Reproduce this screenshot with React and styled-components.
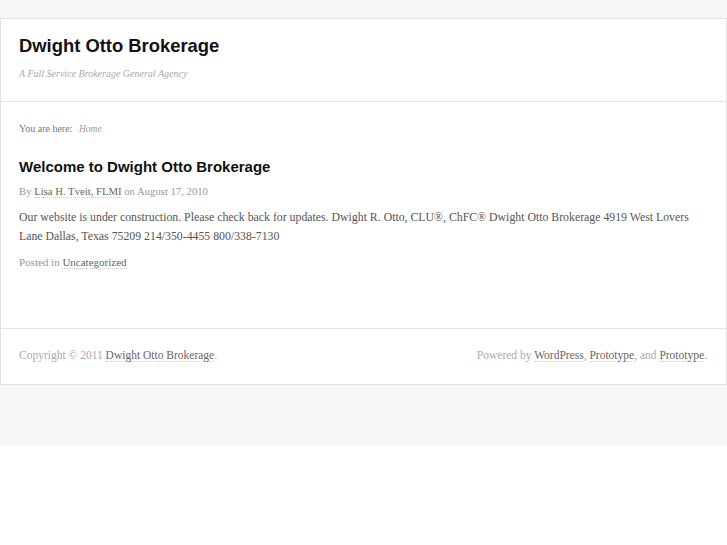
import styled, { createGlobalStyle } from "styled-components";

const GlobalStyle = createGlobalStyle`
  html {
    background: #fff;
  }
  body {
    margin: 0;
    padding: 18px 0 60px;
    background: #f7f7f7;
    font-family: "Liberation Serif", "Times New Roman", serif;
    color: #555;
  }
`;

const Page = styled.div`
  background: #fff;
  border: 1px solid #e3e3e3;
`;

const Header = styled.header`
  padding: 15px 18px 20px;
  border-bottom: 1px solid #e3e3e3;
`;

const SiteTitle = styled.h1`
  margin: 0;
  font-family: "Liberation Sans", Arial, sans-serif;
  font-size: 18.4px;
  line-height: 24px;
  font-weight: bold;
  color: #111;
`;

const Tagline = styled.p`
  margin: 9px 0 0;
  font-size: 10px;
  line-height: 14px;
  font-style: italic;
  color: #aaa;
`;

const Main = styled.main`
  padding: 20px 18px 58px;
`;

const Breadcrumb = styled.div`
  font-size: 10px;
  line-height: 14px;
  color: #777;
`;

const Current = styled.em`
  margin-left: 4px;
  font-size: 9.5px;
  color: #999;
`;

const PostTitle = styled.h2`
  margin: 21px 0 0;
  font-family: "Liberation Sans", Arial, sans-serif;
  font-size: 15px;
  line-height: 20px;
  font-weight: bold;
  color: #111;
`;

const Meta = styled.div`
  margin-top: ${(p) => p.$top || 0}px;
  font-size: ${(p) => p.$size || 11}px;
  line-height: 16px;
  color: #999;
`;

const Link = styled.a`
  color: #666;
  text-decoration: none;
  border-bottom: 1px dotted #ccc;
`;

const Body = styled.p`
  margin: 9px 0 0;
  font-size: 11.8px;
  line-height: 19px;
  color: #555;
`;

const Footer = styled.footer`
  display: flex;
  justify-content: space-between;
  align-items: center;
  padding: 19px 19px 22px 18px;
  border-top: 1px solid #e3e3e3;
  font-size: 11.5px;
  line-height: 14px;
  color: #aaa;
`;

export default function App() {
  return (
    <>
      <GlobalStyle />
      <Page>
        <Header>
          <SiteTitle>Dwight Otto Brokerage</SiteTitle>
          <Tagline>A Full Service Brokerage General Agency</Tagline>
        </Header>
        <Main>
          <Breadcrumb>
            You are here: <Current>Home</Current>
          </Breadcrumb>
          <PostTitle>Welcome to Dwight Otto Brokerage</PostTitle>
          <Meta $top={6} $size={10.7}>
            By <Link href="#">Lisa H. Tveit, FLMI</Link> on August 17, 2010
          </Meta>
          <Body>
            Our website is under construction. Please check back for updates.
            Dwight R. Otto, CLU®, ChFC® Dwight Otto Brokerage 4919 West Lovers
            Lane Dallas, Texas 75209 214/350-4455 800/338-7130
          </Body>
          <Meta $top={8}>
            Posted in <Link href="#">Uncategorized</Link>
          </Meta>
        </Main>
        <Footer>
          <span>
            Copyright © 2011 <Link href="#">Dwight Otto Brokerage</Link>.
          </span>
          <span>
            Powered by <Link href="#">WordPress</Link>,{" "}
            <Link href="#">Prototype</Link>, and <Link href="#">Prototype</Link>.
          </span>
        </Footer>
      </Page>
    </>
  );
}
